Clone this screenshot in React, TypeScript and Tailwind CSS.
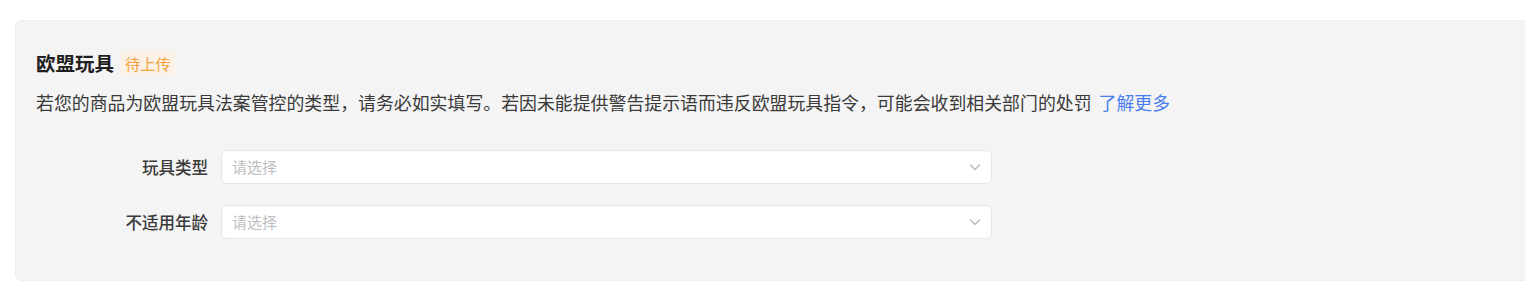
import React from "react";

function Chevron() {
  return (
    <svg width="14" height="14" viewBox="0 0 14 14" fill="none">
      <path d="M2.5 5l4.5 4.5L11.5 5" stroke="#b8b8b8" strokeWidth="1.3" strokeLinecap="round" strokeLinejoin="round" />
    </svg>
  );
}

function Row({ label }: { label: string }) {
  return (
    <div className="flex items-center">
      <div className="w-[172px] pr-0 text-right text-[16.5px] font-medium text-[#3a3a3a] leading-[24px]">{label}</div>
      <div className="ml-[13px] flex h-[34px] w-[771px] items-center justify-between rounded-[6px] border border-[#e6e6e6] bg-white pl-[10px] pr-[9px]">
        <span className="text-[15px] text-[#bdbdbd] leading-[20px]">请选择</span>
        <Chevron />
      </div>
    </div>
  );
}

export default function App() {
  return (
    <div className="h-[305px] w-[1525px] bg-white pt-[20px] pl-[15px]" style={{ fontFamily: '"Noto Sans CJK SC", "Noto Sans", sans-serif' }}>
      <div className="h-[261px] w-[1510px] rounded-l-[7px] border border-r-0 border-[#efefef] bg-[#f4f4f4] pl-[20px] pt-[29px]">
        <div className="flex items-center">
          <span className="text-[19.5px] font-bold leading-[26px] text-[#1f1f1f]">欧盟玩具</span>
          <span className="ml-[7px] rounded-[3px] bg-[#fbf1e6] px-[4px] text-[15.3px] leading-[24px] text-[#f2a23a]">待上传</span>
        </div>
        <p className="mt-[13px] text-[17.9px] leading-[26px] text-[#3a3a3a]">
          若您的商品为欧盟玩具法案管控的类型，请务必如实填写。若因未能提供警告提示语而违反欧盟玩具指令，可能会收到相关部门的处罚
          <span className="ml-[7px] text-[#4a7ef0]">了解更多</span>
        </p>
        <div className="mt-[35px] flex flex-col gap-[21px]">
          <Row label="玩具类型" />
          <Row label="不适用年龄" />
        </div>
      </div>
    </div>
  );
}
